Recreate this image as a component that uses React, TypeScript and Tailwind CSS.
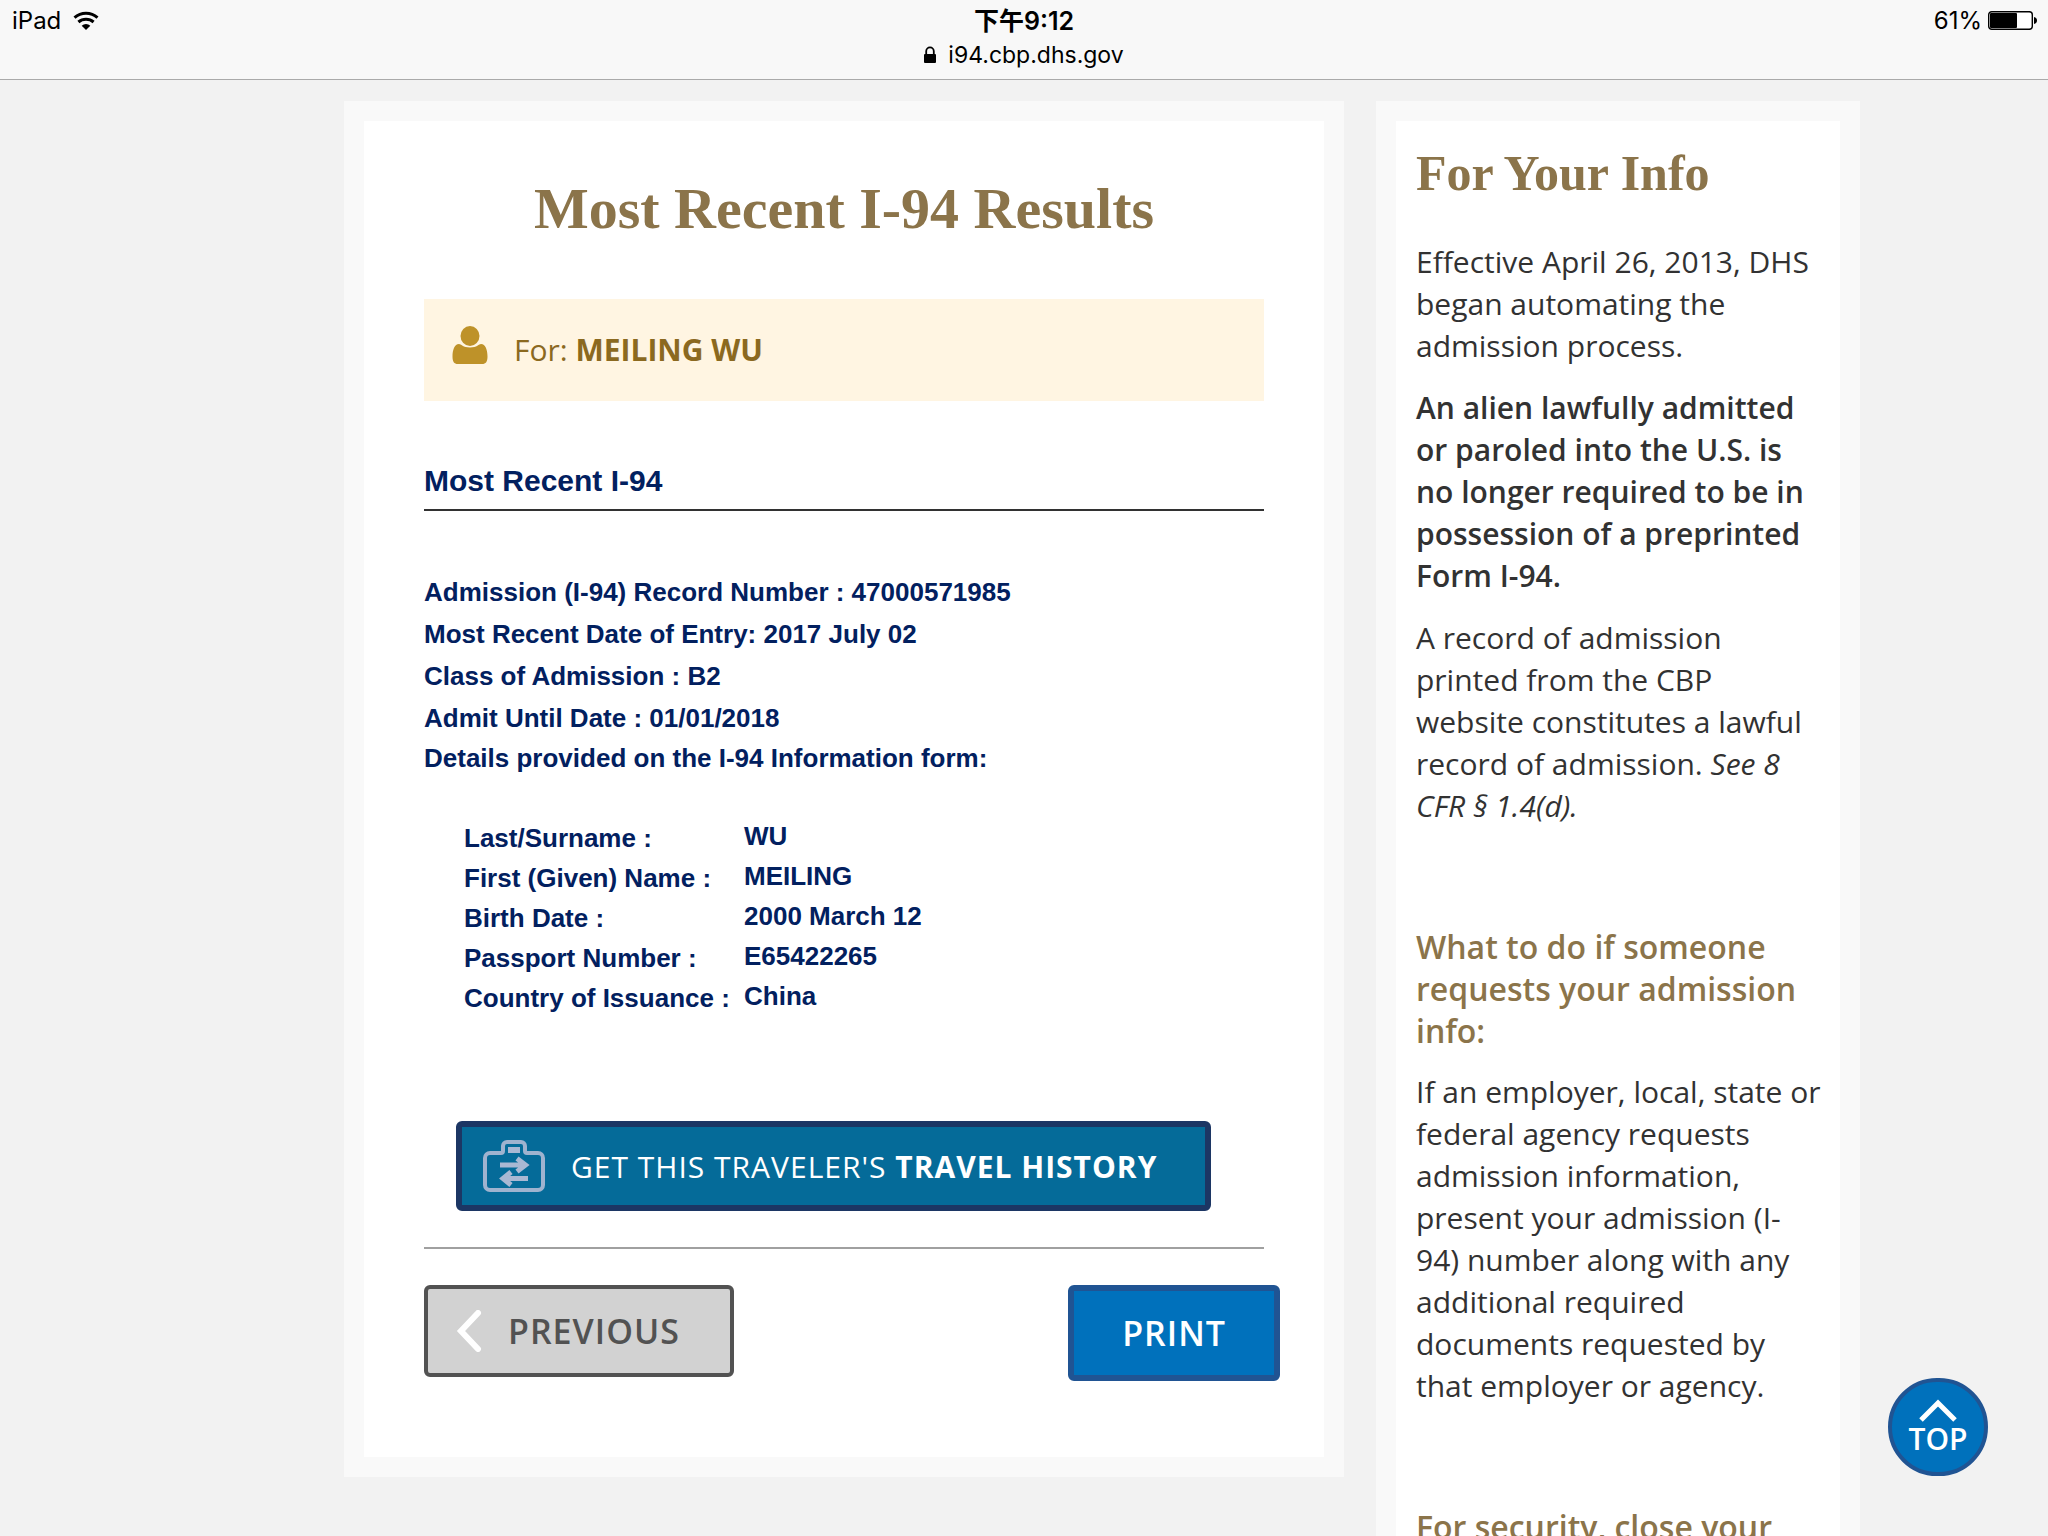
import React from "react";

const admission = [
  "Admission (I-94) Record Number : 47000571985",
  "Most Recent Date of Entry: 2017 July 02",
  "Class of Admission : B2",
  "Admit Until Date : 01/01/2018",
];

const details = [
  ["Last/Surname :", "WU"],
  ["First (Given) Name :", "MEILING"],
  ["Birth Date :", "2000 March 12"],
  ["Passport Number :", "E65422265"],
  ["Country of Issuance :", "China"],
];

function WifiIcon() {
  return (
    <svg width="26" height="20" viewBox="0 0 26 20" fill="none" stroke="#000" aria-hidden="true">
      <path d="M1.500 6.600a17.500 17.500 0 0 1 23 0" strokeWidth="3" />
      <path d="M5.400 11a11.600 11.600 0 0 1 15.200 0" strokeWidth="3" />
      <path d="M8.700 14.700a6.200 6.200 0 0 1 8.600 0L13 19z" fill="#000" stroke="none" />
    </svg>
  );
}

function LockIcon() {
  return (
    <svg width="12" height="18" viewBox="0 0 12 18" aria-hidden="true">
      <path d="M2.200 9V5.200a3.800 3.800 0 0 1 7.600 0V9" fill="none" stroke="#000" strokeWidth="1.800" />
      <rect x="0" y="8" width="12" height="9" rx="1" fill="#000" />
    </svg>
  );
}

function BatteryIcon() {
  return (
    <svg width="50" height="20" viewBox="0 0 50 20" aria-hidden="true">
      <rect x="0.700" y="0.700" width="43.600" height="17.600" rx="3" fill="#fff" stroke="#000" strokeWidth="1.400" />
      <rect x="2" y="2" width="27" height="15" rx="1" fill="#000" />
      <path d="M46 6c2 .6 3 1.800 3 3.500S48 12.400 46 13z" fill="#000" />
    </svg>
  );
}

function PersonIcon() {
  return (
    <svg width="36" height="48" viewBox="0 0 36 48" fill="#be9229" aria-hidden="true">
      <ellipse cx="18" cy="11" rx="9.500" ry="10" />
      <path d="M7 19c2 0 4 3.500 11 3.500S27 19 29 19c4.500 0 6.500 6 6.500 12.500 0 5-1.500 7.500-5.500 7.500H6c-4 0-5.500-2.500-5.500-7.500C.5 25 2.500 19 7 19z" />
    </svg>
  );
}

function TravelIcon() {
  return (
    <svg width="62" height="52" viewBox="0 0 62 52" fill="none" stroke="#9fb3cf" strokeWidth="4" strokeLinejoin="round" aria-hidden="true">
      <path d="M2 18a5 5 0 0 1 5-5h11a2 2 0 0 0 2-2V6a4 4 0 0 1 4-4h14a4 4 0 0 1 4 4v5a2 2 0 0 0 2 2h11a5 5 0 0 1 5 5v27a5 5 0 0 1-5 5H7a5 5 0 0 1-5-5z" />
      <path d="M25 7h12v6H25z" fill="#a9b8d3" stroke="none" />
      <path d="M17 25h25M34 18.500l8.500 6.500-8.500 6.500M45 38.500H20M28 32l-8 6.500 8 6.500" stroke="#a9b8d3" strokeWidth="5" strokeLinejoin="miter" />
    </svg>
  );
}

export default function App() {
  return (
    <div className="flex h-screen flex-col overflow-hidden bg-[#f2f2f2] font-['Open_Sans',sans-serif] text-[#323232]">
      <header className="grid h-20 shrink-0 grid-cols-3 border-b border-[#aaa] bg-[#f8f8f8] px-3 font-['Inter','Noto_Sans_CJK_SC',sans-serif] text-2xl text-black">
        <div className="flex h-[42px] items-center gap-3">
          <span>iPad</span>
          <WifiIcon />
        </div>
        <div className="flex flex-col items-center pt-1">
          <span className="text-[25px] leading-[34px] font-semibold">下午9:12</span>
          <span className="flex items-center gap-3 text-[23px] leading-[34px]">
            <LockIcon />
            i94.cbp.dhs.gov
          </span>
        </div>
        <div className="-mr-0.5 flex h-[42px] items-center justify-end gap-1.5">
          <span>61%</span>
          <BatteryIcon />
        </div>
      </header>

      <div className="flex flex-1 items-start gap-8 overflow-hidden pt-[21px] pr-[188px] pl-[344px]">
        <main className="min-w-0 flex-1 bg-[#f9f9f9] p-5">
          <div className="bg-white px-[60px] pt-12 pb-19">
            <h1 className="text-center font-['Liberation_Serif',serif] text-[58px] leading-20 font-bold text-[#8b744a]">
              Most Recent I-94 Results
            </h1>

            <div className="mt-[50px] flex h-[102px] items-center gap-[26px] bg-[#fff5e2] px-7 pb-0.5 text-[30px] text-[#8b691f]">
              <PersonIcon />
              <p>
                For: <strong className="font-bold">MEILING WU</strong>
              </p>
            </div>

            <section className="font-['Liberation_Sans',sans-serif] font-bold text-[#02205f]">
              <h2 className="mt-[59px] border-b-2 border-[#323232] pb-[7px] text-[30px] leading-[42px]">Most Recent I-94</h2>
              <div className="mt-15 text-[26px] leading-[42px]">
                {admission.map((line) => (
                  <p key={line}>{line}</p>
                ))}
                <p className="leading-[38px]">Details provided on the I-94 Information form:</p>
              </div>
              <table className="mt-[41px] ml-10 text-[26px] leading-10">
                <tbody>
                  {details.map(([label, value]) => (
                    <tr key={label}>
                      <th scope="row" className="w-[280px] p-0 text-left">
                        {label}
                      </th>
                      <td className="p-0 align-top leading-9">{value}</td>
                    </tr>
                  ))}
                </tbody>
              </table>
            </section>

            <button
              type="button"
              className="mt-[103px] ml-8 flex h-[90px] items-center gap-[26px] rounded-md border-6 border-[#1c3664] bg-[#056b99] pr-12 pl-[21px] text-[30px] tracking-[1px] whitespace-nowrap text-white"
            >
              <TravelIcon />
              <span>
                GET THIS TRAVELER'S <strong className="font-bold">TRAVEL HISTORY</strong>
              </span>
            </button>

            <hr className="mt-9 border-t-2 border-[#a0a0a0]" />

            <div className="-mr-4 mt-9 flex items-start justify-between">
              <button
                type="button"
                className="flex h-[92px] items-center gap-[26px] rounded-md border-4 border-[#525252] bg-[#d2d2d2] pr-[50px] pl-7 text-[34px] font-semibold tracking-[1px] text-[#525252]"
              >
                <svg width="26" height="42" viewBox="0 0 26 42" fill="none" stroke="#fff" strokeWidth="6" strokeLinecap="round" aria-hidden="true">
                  <path d="M22 3L5 21l17 18" />
                </svg>
                PREVIOUS
              </button>
              <button
                type="button"
                className="h-24 rounded-md border-6 border-[#205493] bg-[#0071bc] px-12 text-[34px] font-semibold tracking-[1px] text-white"
              >
                PRINT
              </button>
            </div>
          </div>
        </main>

        <aside className="w-[484px] shrink-0 bg-[#f9f9f9] p-5">
          <div className="bg-white px-5 pt-5 pb-20 text-[30px] leading-[42px]">
            <h2 className="font-['Liberation_Serif',serif] text-[50px] leading-16 font-bold text-[#8b744a]">For Your Info</h2>
            <p className="mt-9">Effective April 26, 2013, DHS began automating the admission process.</p>
            <p className="mt-5 font-semibold">
              An alien lawfully admitted or paroled into the U.S. is no longer required to be in possession of a preprinted Form I-94.
            </p>
            <p className="mt-5">
              A record of admission printed from the CBP website constitutes a lawful record of admission. <em>See 8 CFR § 1.4(d).</em>
            </p>
            <h3 className="mt-[99px] text-[32px] font-semibold text-[#8b744a]">What to do if someone requests your admission info:</h3>
            <p className="-mr-2 mt-[19px]">
              If an employer, local, state or federal agency requests admission information, present your admission (I-
              <br />
              94) number along with any additional required documents requested by that employer or agency.
            </p>
            <h3 className="mt-[99px] text-[32px] font-semibold text-[#8b744a]">For security, close your</h3>
          </div>
        </aside>
      </div>

      <a
        href="#top"
        className="fixed right-15 bottom-15 flex h-[98px] w-25 flex-col items-center justify-center rounded-full border-4 border-[#205493] bg-[#0071bc] text-[30px] leading-8 font-semibold text-white"
      >
        <svg width="40" height="24" viewBox="0 0 40 24" fill="none" stroke="#fff" strokeWidth="5" aria-hidden="true">
          <path d="M3 21L20 4l17 17" />
        </svg>
        TOP
      </a>
    </div>
  );
}
